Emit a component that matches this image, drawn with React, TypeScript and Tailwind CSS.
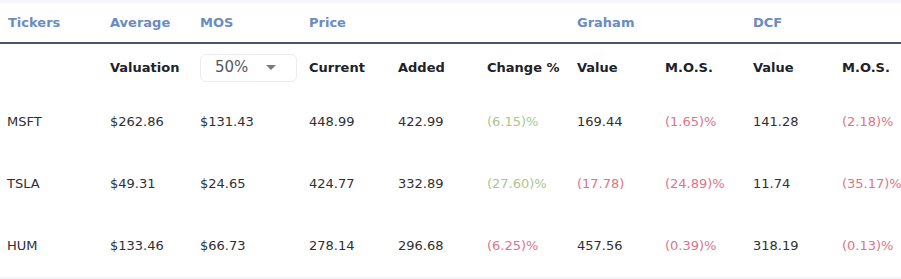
type Tone = "plain" | "green" | "red";
type Cell = { text: string; tone?: Tone };

const cols =
  "grid grid-cols-[102px_90px_109px_89px_89px_90px_88px_88px_89px_1fr] pl-2";

const rows: { ticker: string; cells: Cell[] }[] = [
  {
    ticker: "MSFT",
    cells: [
      { text: "$262.86" },
      { text: "$131.43" },
      { text: "448.99" },
      { text: "422.99" },
      { text: "(6.15)%", tone: "green" },
      { text: "169.44" },
      { text: "(1.65)%", tone: "red" },
      { text: "141.28" },
      { text: "(2.18)%", tone: "red" },
    ],
  },
  {
    ticker: "TSLA",
    cells: [
      { text: "$49.31" },
      { text: "$24.65" },
      { text: "424.77" },
      { text: "332.89" },
      { text: "(27.60)%", tone: "green" },
      { text: "(17.78)", tone: "red" },
      { text: "(24.89)%", tone: "red" },
      { text: "11.74" },
      { text: "(35.17)%", tone: "red" },
    ],
  },
  {
    ticker: "HUM",
    cells: [
      { text: "$133.46" },
      { text: "$66.73" },
      { text: "278.14" },
      { text: "296.68" },
      { text: "(6.25)%", tone: "red" },
      { text: "457.56" },
      { text: "(0.39)%", tone: "red" },
      { text: "318.19" },
      { text: "(0.13)%", tone: "red" },
    ],
  },
];

const toneClass: Record<Tone, string> = {
  plain: "text-[#2f2f33]",
  green: "text-[#a9c78f]",
  red: "text-[#d97689]",
};

export default function App() {
  return (
    <div className="w-[901px] h-[279px] bg-white font-['DejaVu_Sans',sans-serif] text-[13px] flex flex-col">
      <div className="h-[3px] bg-[#f4f5f9]" />

      {/* group headers */}
      <div className={`${cols} h-[39px] items-center font-semibold text-[#6a8cc0]`}>
        <div>Tickers</div>
        <div>Average</div>
        <div>MOS</div>
        <div>Price</div>
        <div />
        <div />
        <div>Graham</div>
        <div />
        <div>DCF</div>
        <div />
      </div>
      <div className="h-[2px] bg-[#4b5468]" />

      {/* column headers */}
      <div className={`${cols} h-[47px] items-center font-semibold text-[#222226]`}>
        <div />
        <div>Valuation</div>
        <div>
          <div className="w-[97px] h-[28px] border border-[#ebedf0] rounded-md flex items-center justify-between pl-[14px] pr-[20px]">
            <span className="text-[15px] font-normal text-[#555a60]">50%</span>
            <span className="w-0 h-0 border-l-[5px] border-r-[5px] border-t-[5px] border-l-transparent border-r-transparent border-t-[#777b80]" />
          </div>
        </div>
        <div>Current</div>
        <div>Added</div>
        <div>Change %</div>
        <div>Value</div>
        <div>M.O.S.</div>
        <div>Value</div>
        <div>M.O.S.</div>
      </div>

      {rows.map((r) => (
        <div key={r.ticker} className={`${cols} h-[62px] items-center`}>
          <div className="text-[#2f2f33] -ml-[1px]">{r.ticker}</div>
          {r.cells.map((c, i) => (
            <div key={i} className={toneClass[c.tone ?? "plain"]}>
              {c.text}
            </div>
          ))}
        </div>
      ))}

      <div className="flex-1 bg-[#f3f3f8]" />
    </div>
  );
}
